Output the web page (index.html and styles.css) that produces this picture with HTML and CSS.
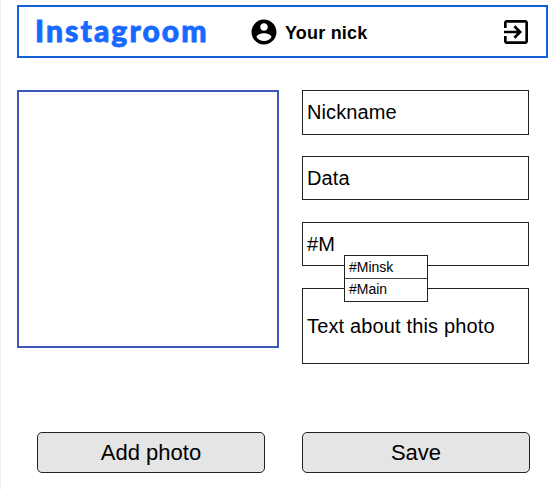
FILE: index.html
```html
<!DOCTYPE html>
<html lang="en">
<head>
<meta charset="utf-8">
<title>Instagroom</title>
<link rel="stylesheet" href="styles.css">
</head>
<body>
<div class="page">
  <header class="header">
    <div class="logo">Instagroom</div>
    <div class="user">
      <svg class="user-icon" viewBox="0 0 24 24"><path fill-rule="evenodd" d="M12 2C6.480 2 2 6.480 2 12s4.480 10 10 10 10-4.480 10-10S17.520 2 12 2zm0 3c1.660 0 3 1.340 3 3s-1.340 3-3 3-3-1.340-3-3 1.340-3 3-3zm0 14.200c-2.500 0-4.710-1.280-6-3.220.030-1.990 4-3.080 6-3.080 1.990 0 5.970 1.090 6 3.080-1.290 1.940-3.500 3.220-6 3.220z"/></svg>
      <span class="nick">Your nick</span>
    </div>
    <svg class="exit-icon" viewBox="0 0 24 24"><path d="M10.090 15.590L11.500 17l5-5-5-5-1.410 1.410L12.670 11H3v2h9.670l-2.580 2.590zM19 3H5c-1.110 0-2 .9-2 2v4h2V5h14v14H5v-4H3v4c0 1.100.89 2 2 2h14c1.100 0 2-.9 2-2V5c0-1.100-.9-2-2-2z"/></svg>
  </header>
  <main class="content">
    <div class="photo"></div>
    <div class="fields">
      <div class="field nickname">Nickname</div>
      <div class="field">Data</div>
      <div class="field tag">#M
        <div class="suggestions">
          <div class="option">#Minsk</div>
          <div class="option">#Main</div>
        </div>
      </div>
      <div class="field about">Text about this photo</div>
    </div>
  </main>
  <footer class="actions">
    <button class="button">Add photo</button>
    <button class="button">Save</button>
  </footer>
</div>
</body>
</html>
```
FILE: styles.css
```css
* { box-sizing: border-box; }
body {
  margin: 0;
  background: #fff;
  color: #000;
  font-family: "Liberation Sans", Arial, sans-serif;
}
.page {
  height: 490px;
  border-left: 1px solid #f1f1f1;
  padding: 5px 3px 0 16px;
  overflow: hidden;
}
.header {
  display: flex;
  align-items: center;
  width: 531px;
  height: 53px;
  border: 2px solid #1460d8;
  padding: 1px 14px 0 16px;
}
.logo {
  width: 214px;
  padding-bottom: 4px;
  font: 900 30px/32px Lato, sans-serif;
  letter-spacing: 2.100px;
  color: #1769ff;
  -webkit-text-stroke: 0.800px #1769ff;
}
.user {
  display: flex;
  align-items: center;
  gap: 6px;
}
.user-icon { width: 30px; height: 30px; }
.nick { font-size: 18px; font-weight: bold; line-height: 22px; padding-top: 1px; letter-spacing: 0.200px; }
.exit-icon { width: 32px; height: 32px; margin-left: auto; }
.content {
  display: flex;
  align-items: flex-start;
  gap: 23px;
  margin-top: 32px;
}
.photo {
  width: 262px;
  height: 258px;
  border: 2px solid #3c59b8;
}
.fields {
  display: flex;
  flex-direction: column;
  gap: 22px;
  width: 227px;
}
.field {
  display: flex;
  align-items: center;
  height: 44px;
  border: 1px solid #222;
  padding: 0 4px;
  font-size: 20px;
  letter-spacing: 0.100px;
}
.nickname { height: 45px; margin-bottom: -1px; }
.tag { position: relative; }
.about { height: 76px; letter-spacing: 0.150px; }
.suggestions {
  position: absolute;
  top: 32px;
  left: 41px;
  z-index: 1;
  width: 84px;
  border: 1px solid #222;
  background: #fff;
  letter-spacing: 0;
}
.option {
  height: 22px;
  padding: 0 4px;
  font-size: 14px;
  line-height: 23px;
}
.option + .option { height: 23px; border-top: 1px solid #444; line-height: 21px; }
.actions {
  display: flex;
  gap: 37px;
  margin: 68px 0 0 20px;
}
.button {
  width: 228px;
  height: 41px;
  border: 1px solid #222;
  border-radius: 5px;
  padding: 0;
  background: #e5e5e5;
  color: #000;
  font: 22px "Liberation Sans", Arial, sans-serif;
}
```
